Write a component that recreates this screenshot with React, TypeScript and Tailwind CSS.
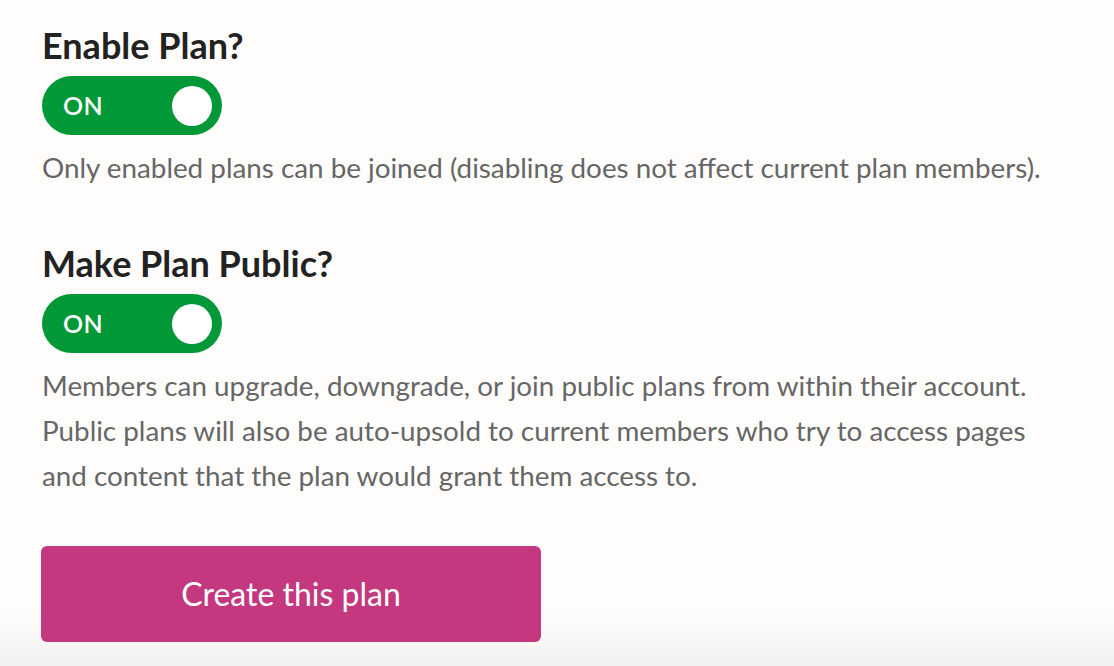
import React from 'react';

type ToggleProps = {
  on: boolean;
};

const Toggle = ({ on }: ToggleProps) => (
  <div className="flex h-[59px] w-[180px] items-center justify-between rounded-full bg-[#029837] pl-[21px] pr-[10px]">
    <span className="text-[25px] font-semibold tracking-[0.3px] text-white">{on ? 'ON' : 'OFF'}</span>
    <span className="h-[40px] w-[40px] rounded-full bg-white" />
  </div>
);

type SettingProps = {
  title: string;
  children: React.ReactNode;
  className?: string;
};

const Setting = ({ title, children, className = '' }: SettingProps) => (
  <section className={className}>
    <h3 className="text-[36px] leading-[40px] font-bold text-[#222]">{title}</h3>
    <div className="mt-[11px]">
      <Toggle on />
    </div>
    <p className="mt-[10px] text-[27.8px] leading-[45px] text-[#666]">{children}</p>
  </section>
);

export default function App() {
  return (
    <div
      className="min-h-[666px] bg-[linear-gradient(to_bottom,#fefdfb_612px,#f1f1f1_666px)] pl-[42px] pt-[25px]"
      style={{ fontFamily: 'Lato, "Open Sans", sans-serif' }}
    >
      <Setting title="Enable Plan?">
        Only enabled plans can be joined (disabling does not affect current plan members).
      </Setting>
      <Setting title="Make Plan Public?" className="mt-[53px]">
        Members can upgrade, downgrade, or join public plans from within their account.
        <br />
        Public plans will also be auto-upsold to current members who try to access pages
        <br />
        and content that the plan would grant them access to.
      </Setting>
      <button className="mt-[48px] -ml-[1px] h-[96px] w-[500px] rounded-[6px] bg-[#c4387f] text-[32px] text-white">
        Create this plan
      </button>
    </div>
  );
}
